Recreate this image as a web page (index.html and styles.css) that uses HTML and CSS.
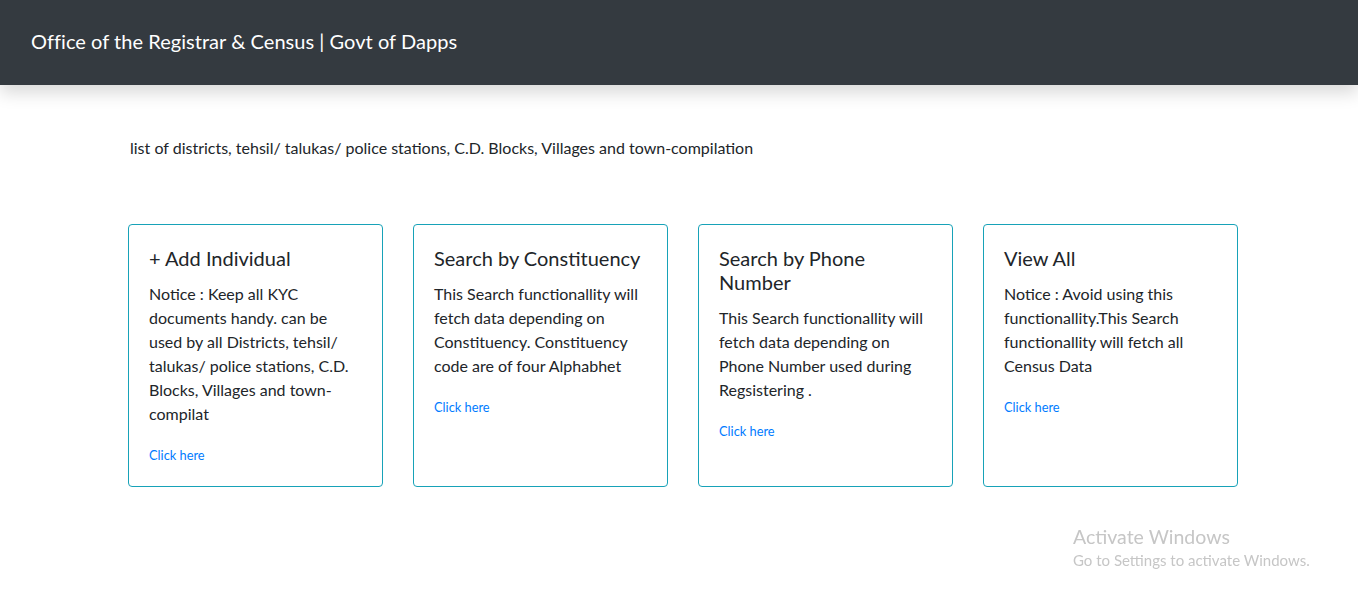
FILE: index.html
```html
<!DOCTYPE html>
<html lang="en">
<head>
<meta charset="utf-8">
<title>Office of the Registrar &amp; Census</title>
<link rel="stylesheet" href="styles.css">
</head>
<body>
<nav class="navbar">
  <span class="brand">Office of the Registrar &amp; Census | Govt of Dapps</span>
</nav>
<main class="content">
  <p class="intro">list of districts, tehsil/ talukas/ police stations, C.D. Blocks, Villages and town-compilation</p>
  <div class="cards">
    <div class="card">
      <h5 class="card-title">+ Add Individual</h5>
      <p class="card-text">Notice : Keep all KYC documents handy. can be used by all Districts, tehsil/ talukas/ police stations, C.D. Blocks, Villages and town-compilat</p>
      <div class="card-link-row"><a class="card-link" href="#">Click here</a></div>
    </div>
    <div class="card">
      <h5 class="card-title">Search by Constituency</h5>
      <p class="card-text">This Search functionallity will fetch data depending on Constituency. Constituency code are of four Alphabhet</p>
      <div class="card-link-row"><a class="card-link" href="#">Click here</a></div>
    </div>
    <div class="card">
      <h5 class="card-title">Search by Phone Number</h5>
      <p class="card-text">This Search functionallity will fetch data depending on Phone Number used during Regsistering .</p>
      <div class="card-link-row"><a class="card-link" href="#">Click here</a></div>
    </div>
    <div class="card">
      <h5 class="card-title">View All</h5>
      <p class="card-text">Notice : Avoid using this functionallity.This Search functionallity will fetch all Census Data</p>
      <div class="card-link-row"><a class="card-link" href="#">Click here</a></div>
    </div>
  </div>
</main>
<div class="watermark">
  <div class="wm-title">Activate Windows</div>
  <div class="wm-sub">Go to Settings to activate Windows.</div>
</div>
</body>
</html>
```
FILE: styles.css
```css
* { box-sizing: border-box; }
html, body { margin: 0; padding: 0; }
body {
  font-family: "Lato", "Noto Sans", sans-serif;
  font-size: 16px;
  line-height: 1.5;
  color: #212529;
  background: #fff;
  height: 598px;
  overflow: hidden;
}
.navbar {
  height: 85px;
  background: #343a40;
  display: flex;
  align-items: center;
  padding: 0 31px 4px;
  box-shadow: 0 8px 16px rgba(0,0,0,0.15);
  position: relative;
}
.brand {
  color: #fff;
  font-size: 20px;
  line-height: 1.2;
  letter-spacing: 0.04px;
}
.content {
  padding: 51px 0 0 128px;
}
.intro {
  margin: 0 0 64px 2px;
  line-height: 24px;
}
.cards {
  display: flex;
  gap: 30px;
  align-items: stretch;
}
.card {
  width: 255px;
  border: 1px solid #17a2b8;
  border-radius: 4px;
  padding: 21px 20px 19px;
  min-height: 262px;
}
.card-title {
  margin: 0 0 12px;
  font-size: 20px;
  font-weight: 400;
  line-height: 24px;
}
.card-text {
  margin: 0 0 16px;
  line-height: 24px;
}
.card-link-row { line-height: 24px; }
.card-link {
  color: #007bff;
  font-size: 12.8px;
  text-decoration: none;
}
.watermark {
  position: fixed;
  left: 1073px;
  top: 524px;
  color: #c6c6c6;
  pointer-events: none;
}
.wm-title { font-size: 19.5px; line-height: 26px; }
.wm-sub { font-size: 15px; line-height: 20px; }
```
